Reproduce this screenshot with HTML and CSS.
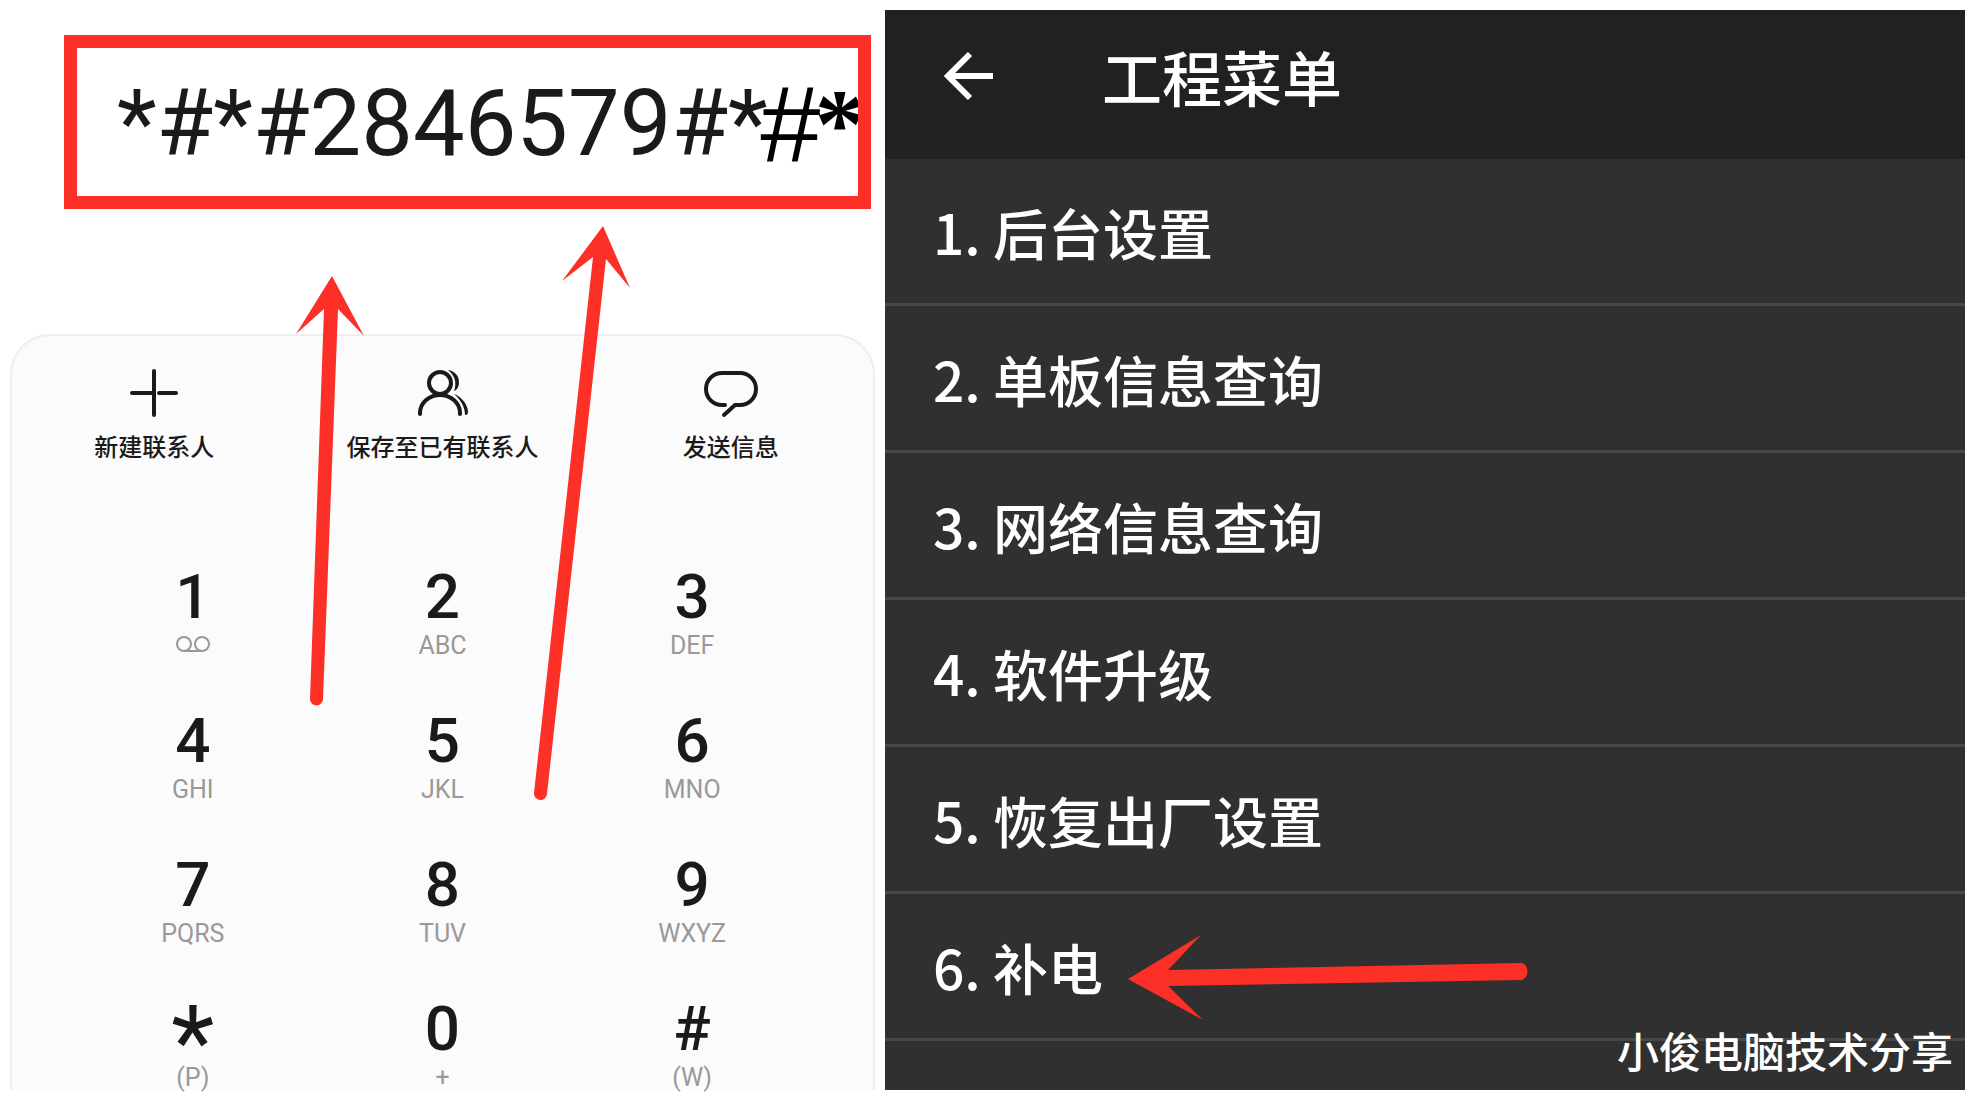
FILE: index.html
```html
<!DOCTYPE html>
<html lang="zh-CN">
<head>
	<meta charset="UTF-8">
	<title>工程菜单</title>
	<link rel="stylesheet" href="styles.css">
</head>
<body>
	<div class="dial">
		<div class="number"><span>*#*#2846579#*</span><span class="hash">#</span><span class="star">*</span></div>
		<div class="pad">
			<div class="actions">
				<button type="button">
					<svg width="54" height="54" viewBox="0 0 54 54"><path d="M27 5v44M5 27h21M32 27h17"/></svg>
					<span>新建联系人</span>
				</button>
				<button type="button">
					<svg width="54" height="54" viewBox="0 0 54 54">
						<circle cx="25" cy="17" r="11"/>
						<path d="M5 48v-1a20 18 0 0 1 40 0v1"/>
						<path class="fill" d="M33 4c7 1 11 6 11 12 0 5-2 8-5 9 2-5 3-14-6-21zM39 28c8 3 14 11 14 18 0 2-1 3-3 3 0-8-4-15-11-21z"/>
					</svg>
					<span>保存至已有联系人</span>
				</button>
				<button type="button">
					<svg width="54" height="54" viewBox="0 0 54 54"><path d="M21 39h-3a16 16 0 0 1 0-32h18a16 16 0 0 1 0 32h-5L20 49"/></svg>
					<span>发送信息</span>
				</button>
			</div>
			<div class="keys">
				<button type="button"><b>1</b><small><svg class="voice" width="34" height="26" viewBox="0 0 34 26"><circle cx="8" cy="12" r="7"/><circle cx="26" cy="12" r="7"/><path d="M8 19h18"/></svg></small></button>
				<button type="button"><b>2</b><small>ABC</small></button>
				<button type="button"><b>3</b><small>DEF</small></button>
				<button type="button"><b>4</b><small>GHI</small></button>
				<button type="button"><b>5</b><small>JKL</small></button>
				<button type="button"><b>6</b><small>MNO</small></button>
				<button type="button"><b>7</b><small>PQRS</small></button>
				<button type="button"><b>8</b><small>TUV</small></button>
				<button type="button"><b>9</b><small>WXYZ</small></button>
				<button type="button"><b class="big">*</b><small>(P)</small></button>
				<button type="button"><b>0</b><small>+</small></button>
				<button type="button"><b>#</b><small>(W)</small></button>
			</div>
		</div>
		<!-- 红色箭头 -->
		<svg class="arrows" width="865" height="1080" viewBox="10 10 865 1080">
			<path d="M332 276L364 336L338 309L323 699A6 6 0 0 1 310 699L324 309L296 334Z"/>
			<path d="M603 226L630 288L606 259L547 794A6 6 0 0 1 534 793L593 257L562 281Z"/>
		</svg>
	</div>

	<div class="menu">
		<div class="title">
			<button type="button" aria-label="返回">
				<svg width="50" height="50" viewBox="0 0 50 50"><path d="M49 25H6M26 3L4 25l22 22"/></svg>
			</button>
			<h1>工程菜单</h1>
		</div>
		<ul>
			<li><a href="#">1. 后台设置</a></li>
			<li><a href="#">2. 单板信息查询</a></li>
			<li><a href="#">3. 网络信息查询</a></li>
			<li><a href="#">4. 软件升级</a></li>
			<li><a href="#">5. 恢复出厂设置</a></li>
			<li><a href="#">6. 补电</a>
				<svg class="point" width="404" height="86" viewBox="1128 935 404 86"><path d="M1128 979L1201 935L1168 970L1522 963A8 9 0 0 1 1522 980L1168 986L1203 1020Z"/></svg>
			</li>
		</ul>
		<p class="mark">小俊电脑技术分享</p>
	</div>
</body>
</html>
```
FILE: styles.css
```css
*{
	box-sizing:border-box;
	margin:0;
	padding:0;
}

body{
	display:flex;
	gap:10px;
	padding:10px;
	background:#fff;
	font-family:Roboto,"Noto Sans CJK SC",sans-serif;
}

button{
	border:0;
	background:none;
	font-family:inherit;
	color:inherit;
}

/* 拨号 */
.dial{
	flex:865;
	min-width:0;
	position:relative;
	color:#1a1a1a;
}

.number{
	display:flex;
	align-items:center;
	height:174px;
	margin:25px 4px 125px 54px;
	padding:4px 0 0 40px;
	border:13px solid #fd3027;
	font-size:92px;
	line-height:144px;
	white-space:nowrap;
	overflow:hidden;
}

.number .hash{
	margin-left:-9px;
	font-family:"Liberation Sans",sans-serif;
	font-size:108px;
	font-style:italic;
	color:#000;
}

.number .star{
	margin-left:-4px;
	font-family:"Liberation Serif",serif;
	font-size:100px;
	font-weight:bold;
	line-height:128px;
	color:#000;
}

.pad{
	padding-top:30px;
	border:2px solid #eee;
	border-bottom:0;
	border-radius:40px 40px 0 0;
	background:#fbfbfb;
}

.actions{
	display:grid;
	grid-template-columns:repeat(3,1fr);
	margin:0 -2px 98px;
}

.actions button{
	display:flex;
	flex-direction:column;
	align-items:center;
	gap:10px;
	font-size:24px;
	font-weight:500;
	line-height:36px;
}

.actions svg{
	fill:none;
	stroke:#1a1a1a;
	stroke-width:4;
	stroke-linecap:round;
}

.actions .fill{
	fill:#1a1a1a;
	stroke:none;
}

.keys{
	display:grid;
	grid-template-columns:repeat(3,1fr);
	row-gap:50px;
	padding:0 56px;
}

.keys button{
	display:flex;
	flex-direction:column;
	align-items:center;
	gap:4px;
}

.keys b{
	height:64px;
	font-size:62px;
	font-weight:500;
	line-height:66px;
}

.keys .big{
	font-size:100px;
	font-weight:400;
	line-height:92px;
}

.keys small{
	height:26px;
	font-size:25px;
	line-height:28px;
	color:#999;
}

.voice{
	display:block;
	fill:none;
	stroke:#999;
	stroke-width:2;
}

.arrows{
	position:absolute;
	top:0;
	left:0;
	fill:#fd3027;
	pointer-events:none;
}

/* 工程菜单 */
.menu{
	flex:1080;
	min-width:0;
	position:relative;
	background:#303030;
	color:#fff;
	font-family:"Noto Sans CJK SC",sans-serif;
}

.title{
	display:flex;
	align-items:center;
	gap:108px;
	height:149px;
	padding:0 60px 18px 59px;
	background:#212121;
}

.title button{
	height:50px;
}

.title svg{
	fill:none;
	stroke:#fff;
	stroke-width:6;
}

.title h1{
	font-size:60px;
	font-weight:500;
	line-height:80px;
}

.menu ul{
	list-style:none;
}

.menu li{
	position:relative;
	border-bottom:3px solid #484848;
}

.menu a{
	display:block;
	padding-left:48px;
	font-size:55px;
	font-weight:500;
	line-height:144px;
	color:#fff;
	text-decoration:none;
}

.point{
	position:absolute;
	top:41px;
	left:243px;
	fill:#fd3027;
}

.mark{
	position:absolute;
	right:12px;
	bottom:10px;
	font-size:42px;
	font-weight:500;
	line-height:60px;
}
```
